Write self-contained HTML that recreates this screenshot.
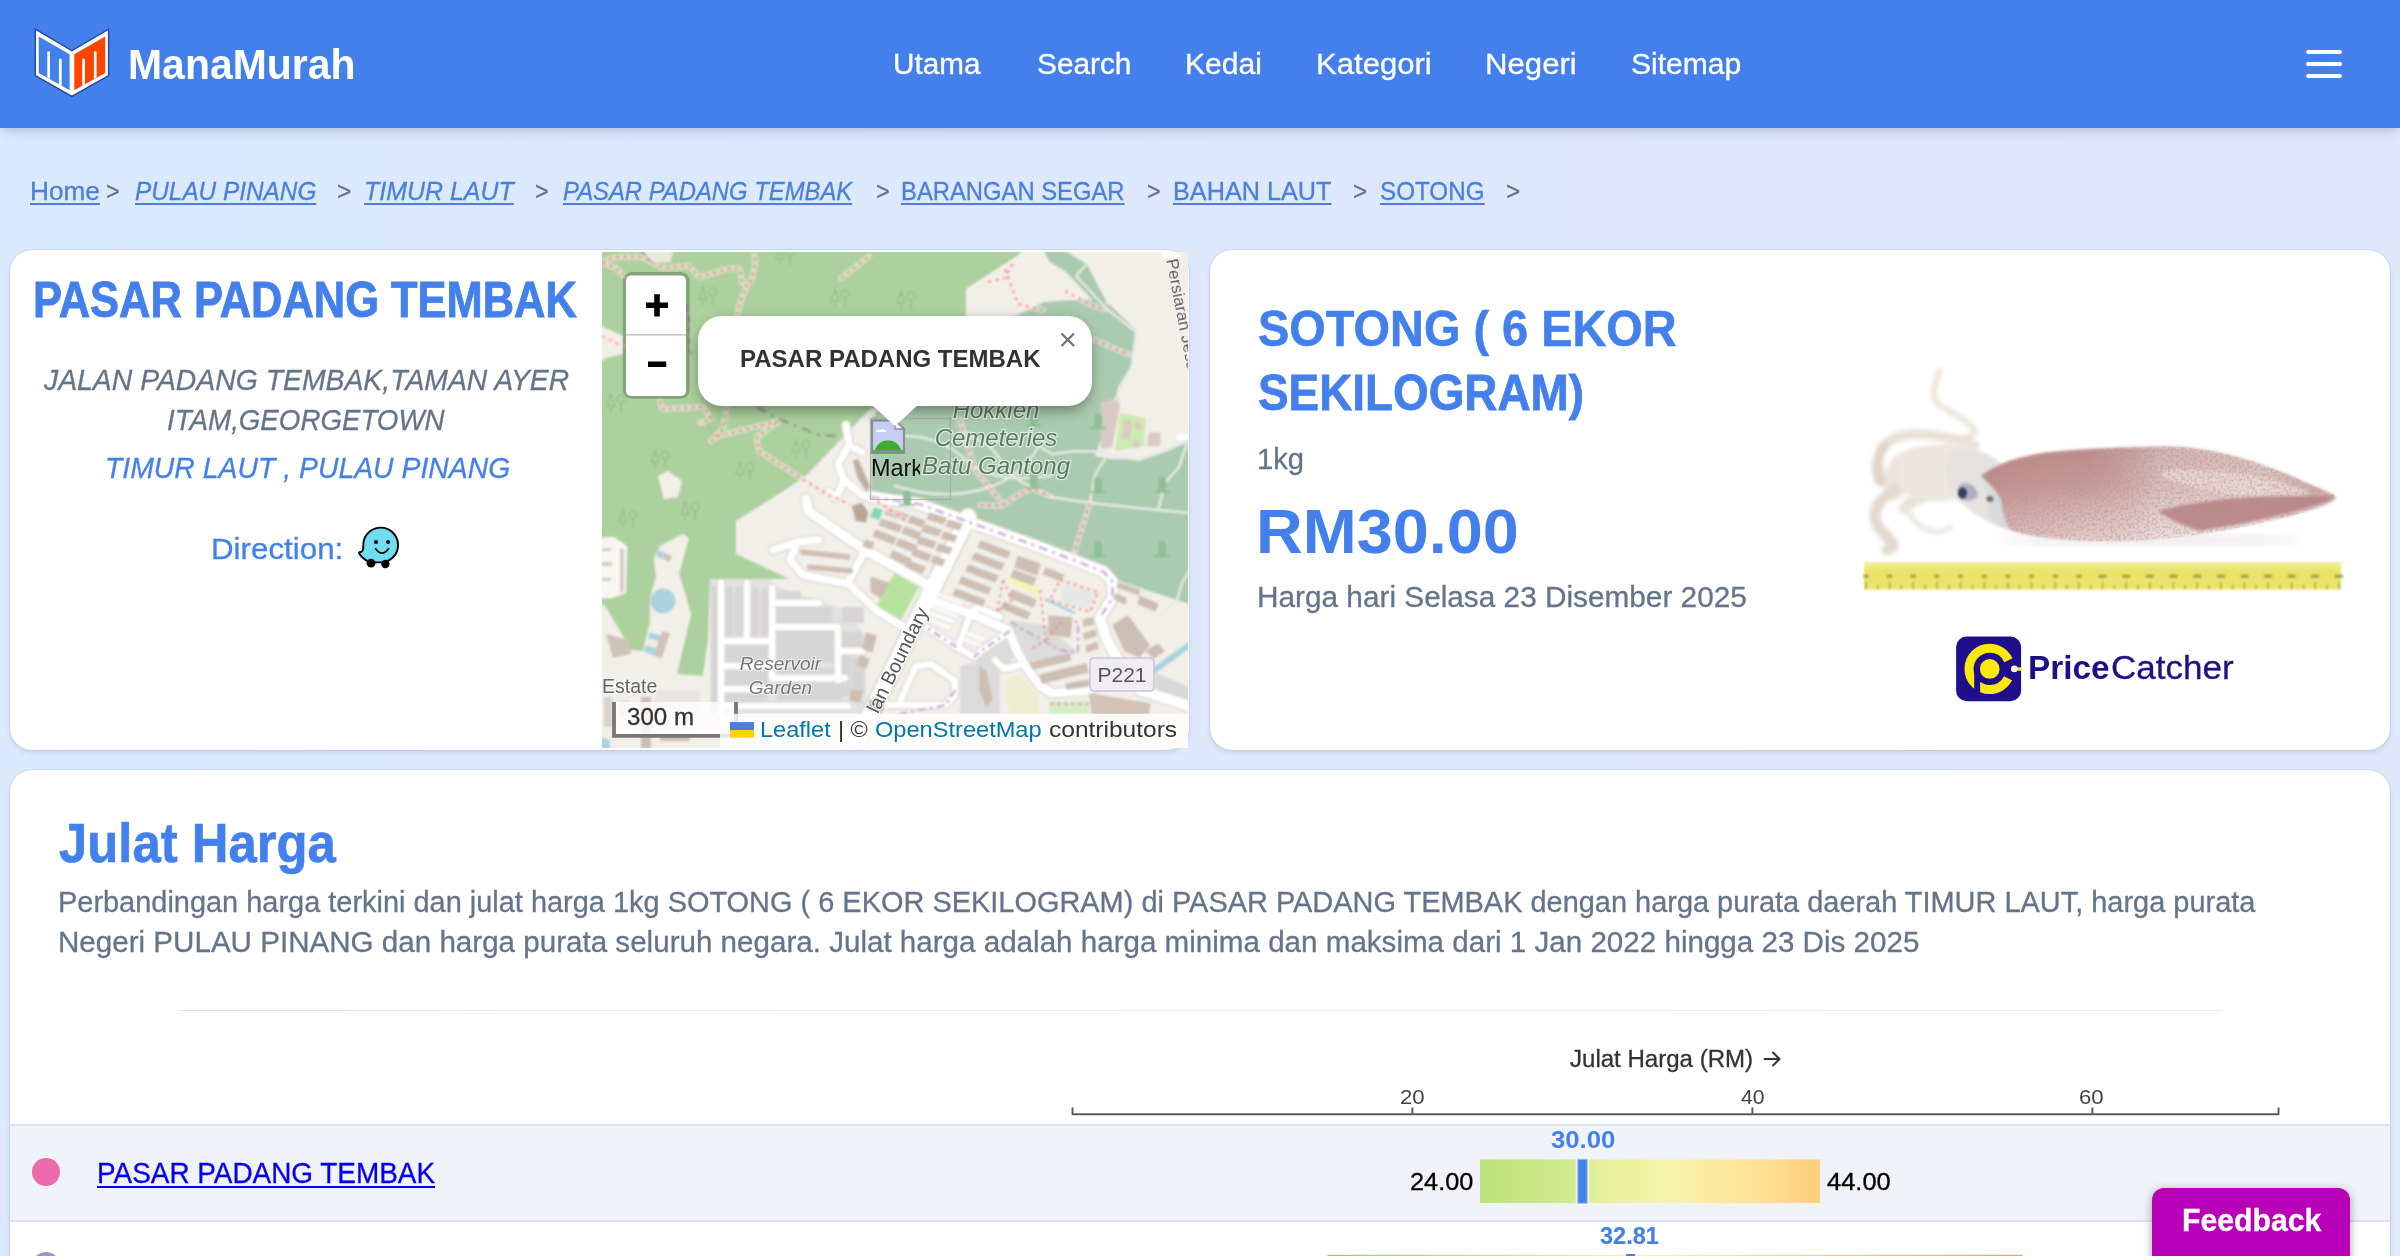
<!DOCTYPE html>
<html lang="ms"><head><meta charset="utf-8"><title>ManaMurah - SOTONG di PASAR PADANG TEMBAK</title>
<style>
*{box-sizing:border-box;margin:0;padding:0}
html,body{width:2400px;height:1256px;overflow:hidden}
body{font-family:"Liberation Sans",sans-serif;position:relative;background:linear-gradient(90deg,#dbeafe 0%,#e0e7fb 100%)}
.t{position:absolute;white-space:nowrap;display:block;z-index:5;transform-origin:0 50%}
.abs{position:absolute;display:block}
#hdr{left:0;top:0;width:2400px;height:128px;background:#4380eb;box-shadow:0 8px 14px -4px rgba(30,50,80,.13),0 3px 6px -1px rgba(30,50,80,.12)}
.card{background:#fff;border-radius:22px;box-shadow:0 0 0 1px rgba(160,170,185,.20),0 3px 5px rgba(100,120,150,.16)}
.hb{left:2306px;width:36px;height:4px;background:#fff;border-radius:2px}
#row1{left:10px;top:1124px;width:2380px;height:98px;background:#f0f3f9;border-top:2px solid #dde3ee;border-bottom:2px solid #dde3ee}
#fb{left:2152px;top:1188px;width:198px;height:90px;background:#b800b8;border-radius:12px;box-shadow:0 2px 10px rgba(0,0,0,.35);z-index:29}
</style></head><body>
<div class="abs" id="hdr"></div>
<div class="abs" style="left:30px;top:26px;width:84px;height:76px;z-index:6"><svg width="84" height="76" viewBox="30 26 84 76" style="display:block">
<path d="M35.300 29.200L71.900 50.800L108.600 29.200V75.500L71.900 96.400L35.300 75.500Z" fill="#fff" stroke="#23479a" stroke-width="1.400" stroke-linejoin="miter"/>
<path d="M38.700 36.400L69.600 54.300V90.300L38.700 73Z" fill="#4380eb"/>
<path d="M74.300 54.300L105.200 36.400V73L74.300 90.300Z" fill="#ff4500"/>
<path d="M47.300 51.500H50V79L47.300 77.500ZM58.900 58.700H61.700V86L58.900 84.500ZM82.200 58.700H85V84.500L82.200 86ZM93.900 51.500H96.600V77.500L93.900 79Z" fill="#fff"/>
</svg>
</div>
<div class="abs hb" style="top:50px;z-index:6"></div><div class="abs hb" style="top:62px;z-index:6"></div><div class="abs hb" style="top:74px;z-index:6"></div>

<div class="abs card" style="left:10px;top:250px;width:1179px;height:500px"></div>
<div class="abs" style="left:602px;top:252px;width:586.500px;height:496px;overflow:hidden;z-index:8"><div style="margin-left:-1px"><svg width="587" height="496" viewBox="601 252 587 496" style="display:block;font-family:'Liberation Sans',sans-serif">
<defs>
 <filter id="mb" x="-2%" y="-2%" width="104%" height="104%"><feGaussianBlur stdDeviation="0.85"/></filter>
 <filter id="lb" x="-2%" y="-2%" width="104%" height="104%"><feGaussianBlur stdDeviation="0.45"/></filter>
 <filter id="ps" x="-10%" y="-20%" width="120%" height="160%"><feGaussianBlur stdDeviation="7"/></filter>
 <g id="tree" fill="none" stroke="#97c08b" stroke-width="1.5" stroke-linecap="round"><circle cx="5" cy="-4" r="4"/><path d="M5 0V9M-5 -9L-9 3H-1ZM-5 3V9"/></g>
 <g id="grave" fill="#8fbf96"><path d="M-4 6V-4A4 4 0 0 1 4 -4V6H8V8H-8V6Z"/></g>
</defs>
<g filter="url(#mb)">
<rect x="595" y="246" width="600" height="510" fill="#f2efe9"/>
<!-- forest -->
<path fill="#add19e" d="M595 246H1024L1020 254L966 289V420L900 410L871 408L806 476L782 492L736 521V554L790 579H710L708 640L703 676L677 674L691 614L679 573L689 538L683 534L660 546L654 558L656 577L650 598V622L643 651L631 650L606 607L595 600V539L602 538L614 536L627 546L633 558L626 594L612 598L595 599V365L607 357.500L622.700 354V336L595 323Z"/>
<path fill="#f2efe9" d="M658 476L668 471L682 481L678 497L664 499Z"/>
<path fill="#f2efe9" d="M641 246L675 246L670 262L651 262Z" opacity=".85"/>
<!-- cemetery -->
<path fill="#aacbaf" d="M966 330L1018 315L1043 302L1087 299L1110 305L1136 330L1130 370L1114 400L1195 436V606L1116 580L1076 560L1000 531L967 515L919 501L871 495V420L880 406L966 406Z"/>
<path fill="#aacbaf" d="M1041 246L1056 246L1087 264L1107 303L1098 306L1066 272L1050 262Z"/>
<!-- compound -->
<path fill="#f2efe9" d="M1114 398L1128 398L1188 433V442L1168 451L1142 460L1110 459L1095 456L1098 448Z"/>
<path fill="#cdebb0" d="M1120 413L1146 418L1144 446L1115 451Z"/>
<path fill="#d9cbc4" d="M1101 402L1118 398L1120 406L1112 448L1101 449Z"/>
<path fill="#d9cbc4" d="M1149 432L1161 433L1160 446L1147 446ZM1124 420L1132 421L1130 440L1122 439Z"/>
<circle cx="1138" cy="426" r="4.5" fill="#d9cbc4"/><circle cx="1136" cy="444" r="4" fill="#d9cbc4"/>
<!-- residential gray zones -->
<path fill="#e3e2e1" d="M710 579H770L776 586L850 611L866 640V714H710Z"/>
<path fill="#dddcdc" d="M1010 620L1045 625L1078 652L1069 657L1031 664L1020 666L1016 651Z"/>
<path fill="#dddcdc" d="M980 651L1010 639L1016 651L1010 663L1002 666L995 660L990 664Z"/>
<path fill="#dcdbdb" d="M960 666L975 663L990 675L995 714H960ZM977 645L1000 636V714H980L975 680Z"/>
<path fill="#d9d9d9" d="M1155 672L1195 690V714L1155 695Z"/>
<path fill="#eceecf" d="M1008 678L1019 675L1039 696V714H1010L1005 690Z"/>
<path fill="#f5f4b4" d="M1010 575L1039 589L1037 596L1010 583Z"/>
<path fill="#e6e8e7" d="M1063 583L1096 592L1090 611L1060 601Z"/>
<path fill="#d3edc8" d="M1049 701H1089V714H1049Z"/>
<path fill="#b8e39f" d="M895 572L919 587L899 624L877 605Z"/>
<path fill="#80d9b4" d="M874 507L883 510L879 520L870 517Z"/>
<!-- gray building blocks in residential -->
<g fill="#d7d6d6">
<rect x="711" y="585" width="8" height="128"/>
<rect x="726" y="586" width="7" height="50"/><rect x="735" y="586" width="7" height="50"/><rect x="752" y="588" width="7" height="48"/><rect x="761" y="588" width="7" height="48"/>
<rect x="726" y="646" width="42" height="16"/><rect x="726" y="671" width="42" height="14"/><rect x="726" y="693" width="42" height="9"/>
<rect x="777" y="591" width="24" height="7"/><rect x="777" y="607" width="55" height="15"/><rect x="777" y="632" width="56" height="30"/><rect x="777" y="668" width="56" height="8"/><rect x="777" y="683" width="66" height="17"/>
<rect x="842" y="607" width="22" height="16"/><rect x="843" y="632" width="20" height="16"/><rect x="843" y="656" width="8" height="40"/>
<rect x="852" y="658" width="12" height="36"/>
</g>
<!-- water -->
<circle cx="663" cy="601" r="12.5" fill="#aad3df"/>
<path fill="#aad3df" d="M650 632L662 636L660 642L648 638ZM646 645L658 649L656 656L644 652ZM658 550L665 553L662 559L656 556Z"/>
<path d="M1045 599L1075 613" stroke="#a9d3de" stroke-width="3" fill="none"/>
<path d="M1152 672L1192 643" stroke="#aad3df" stroke-width="6" fill="none"/>
<path fill="#aad3df" d="M595 736L610 740V750H595Z"/>
<!-- left complex -->
<path fill="#f8f6f3" d="M595 538L614 537L627 546L626 593L612 598L595 599Z"/>
<path fill="#d6cbc3" d="M620 548L624 549V592L620 593ZM601 548H611V551H601ZM601 562H612V566H601ZM601 578H611V581H601Z"/>
<path fill="#d0c3b8" d="M606 634L629 640L631 654L613 658Z M662 631L670 633L662 658L654 656ZM665 553L672 556L669 562L663 559Z"/>
<path fill="#d9d4cf" d="M604 697H612V727H604ZM616 705L628 700L632 712L620 716Z"/><path fill="#cdbfb3" d="M641 697H651V750H641ZM660 735H690V741H660Z"/><path fill="#e0dfdf" d="M655 690H700V714H655Z" opacity=".6"/>
<!-- roads casing -->
<g fill="none" stroke="#d9d4cd" stroke-linecap="round" stroke-linejoin="round">
<path stroke-width="19" d="M968 517L852.500 750"/>
<path stroke-width="13" d="M871 497L919 504L966 521L1028 543L1076 561L1104 572L1112 581L1113 597L1100 618L1106 638L1118 660L1140 690L1195 708"/>
<path stroke-width="12" d="M806 499L808 511L865 550L919 580L936 590"/>
<path stroke-width="10" d="M865 550L848 583L877 611L905 628"/>
<path stroke-width="10" d="M773 550L797 542L819 540M797 543L790 560L803 575L849 584"/>
<path stroke-width="10" d="M846 425L849 445L838 464L844 480L836 498L829 492M854 448L862 452M844 480L862 495L872 497"/>
<path stroke-width="11" d="M932 600L971 614L1008 630L1017 651L1025 666L1040 686L1052 693L1090 691"/>
<path stroke-width="9" d="M918 622L958 648L974 657L981 651L1010 631M971 612L958 648M971 612L977 607L1000 617"/>
<path stroke-width="9" d="M901 699L916 666L931 664L955 681L954 696L946 705L886 705M995 660L1004 669L1017 666"/>
<path stroke-width="9" d="M721 583V714M747 583V640M772 588V678M721 641H772M721 666H772M721 689H772M721 706H848M772 603H819M772 627H838M838 627V680M838 651H863M772 678H845"/>
</g>
<!-- roads fill -->
<g fill="none" stroke="#fff" stroke-linecap="round" stroke-linejoin="round">
<path stroke-width="16" d="M968 517L852.500 750"/>
<path stroke-width="10.5" d="M871 497L919 504L966 521L1028 543L1076 561L1104 572L1112 581L1113 597L1100 618L1106 638L1118 660L1140 690L1195 708"/>
<path stroke-width="9.5" d="M806 499L808 511L865 550L919 580L936 590"/>
<path stroke-width="7.5" d="M865 550L848 583L877 611L905 628"/>
<path stroke-width="7.5" d="M773 550L797 542L819 540M797 543L790 560L803 575L849 584"/>
<path stroke-width="7.5" d="M846 425L849 445L838 464L844 480L836 498L829 492M854 448L862 452M844 480L862 495L872 497"/>
<path stroke-width="8.5" d="M932 600L971 614L1008 630L1017 651L1025 666L1040 686L1052 693L1090 691"/>
<path stroke-width="6.5" d="M918 622L958 648L974 657L981 651L1010 631M971 612L958 648M971 612L977 607L1000 617"/>
<path stroke-width="6.5" d="M901 699L916 666L931 664L955 681L954 696L946 705L886 705M995 660L1004 669L1017 666"/>
<path stroke-width="6.5" d="M721 583V714M747 583V640M772 588V678M721 641H772M721 666H772M721 689H772M721 706H848M772 603H819M772 627H838M838 627V680M838 651H863M772 678H845"/>
<path stroke-width="6" d="M1179 437L1190 437M1164 254L1177 256"/>
</g>
<!-- purple dashed -->
<path d="M871 497L919 504L966 521L1028 543L1076 561L1104 572L1112 581L1113 597L1101 616" fill="none" stroke="#c9a9d8" stroke-width="2.6" stroke-dasharray="9 5 3 5"/>
<path d="M1010 631L981 651L974 657M1010 622L1060 650L1078 653L1078 622L1062 622M918 622L958 648M955 690L946 705L900 714" fill="none" stroke="#c4abd3" stroke-width="2.4" stroke-dasharray="8 4 3 4"/>
<!-- buildings -->
<g fill="#cdbfb3" stroke="#cdbfb3" stroke-width="1.300" stroke-linejoin="round">
<path d="M852 506L862 503L868 512L866 522L856 521Z" fill="#b9a594"/><path d="M853 461L858 459L870 487L866 491L858 478Z" fill="#bfae9f"/>
<path d="M801 550L849 555V559L801 554ZM808 565L852 569V573L808 569ZM871 577L889 583L881 598L871 592Z"/>
<!-- block 1 rows -->
<path d="M888 508L908 515L905 521L885 514ZM911 516L925 521L922 527L908 522ZM882 519L902 526L899 532L879 525ZM905 527L921 533L918 539L902 533ZM876 530L896 538L893 544L873 536ZM899 539L917 546L914 552L896 545ZM893 551L911 559L908 565L890 557ZM866 540L874 543L871 549L863 546Z"/>
<path d="M930 513L946 518L943 524L927 519ZM949 520L962 524L959 530L946 526ZM925 525L941 530L938 536L922 531ZM944 532L957 536L954 542L941 538ZM920 537L936 542L933 548L917 543ZM939 544L952 548L949 554L936 550ZM915 549L931 555L928 561L912 555ZM934 556L945 560L942 566L931 562ZM909 561L925 567L922 573L906 567Z"/>
<!-- block 2 rows (right of Jalan Boundary) -->
<path d="M981 541L1010 552L1007 558L978 547ZM975 553L1004 564L1001 570L972 559ZM969 565L998 576L995 582L966 571ZM962 577L991 588L988 594L959 583ZM1018 556L1040 564L1037 575L1015 567ZM1012 590L1036 600L1033 607L1009 597ZM1004 602L1030 613L1027 619L1001 608ZM956 589L985 600L982 606L953 595ZM1014 570L1036 578L1033 585L1011 577ZM1046 568L1064 575L1061 581L1043 574Z"/>
<path d="M1049 616L1072 618L1070 637L1049 634ZM1031 663L1069 654L1071 660L1033 669ZM1040 675L1086 664L1088 672L1042 683ZM1066 684L1089 680L1089 686L1067 689Z"/>
<path d="M1113 625L1128 616L1149 645L1139 657L1125 651ZM1146 651L1158 644L1164 651L1154 658ZM1119 583L1140 590L1138 595L1117 587ZM1140 596L1158 604L1155 611L1138 604ZM1116 594L1126 598L1125 604L1114 599ZM1083 620L1092 618L1094 624L1084 626ZM1083 634L1095 630L1096 636L1085 639ZM1086 646L1097 642L1098 648L1087 652Z"/>
<path d="M1090 694L1150 704L1148 714H1092Z" fill="#d4c4b8"/>
<path d="M866 633L876 636L872 652L863 649ZM860 656L869 659L866 668L857 665ZM852 690L862 692L860 702L850 700ZM870 700L884 703L882 712L868 709ZM980 667L986 672L992 700L986 706L980 690Z"/>
</g>
<!-- parking rows -->
<path d="M937 594L962 604M934 600L960 610M931 606L957 616M928 612L954 622M925 618L950 628M965 632L985 640M962 638L982 646" stroke="#fff" stroke-width="2.6" fill="none" opacity=".9"/>
<!-- cemetery thin paths -->
<g fill="none" stroke="#e4ebe3" stroke-width="2.4" stroke-linecap="round" stroke-linejoin="round">
<path d="M1039 446L1052 454L1076 451L1106 452L1112 455L1139 460L1168 449L1187 440"/>
<path d="M1107 455L1095 475L1090 502"/>
<path d="M1050 497L1090 503L1158 510L1190 513"/>
<path d="M1187 443L1179 467L1165 483L1158 510"/>
<path d="M1190 569L1182 583L1177 600L1160 615"/>
<path d="M960 434Q990 440 1000 460T1040 490M905 436Q940 436 966 460T1050 476M895 486Q940 500 980 490T1039 446M1086 265L1076 276L1106 308L1136 332L1132 366L1119 388L1116 400"/>
</g>
<!-- footpaths -->
<g fill="none" stroke="rgba(250,240,235,.5)" stroke-width="6" stroke-linecap="round" stroke-linejoin="round">
<path id="fps" d="M602 263L611 258.500L621.500 256.600L640.600 257.200L650 261.300L657.300 265.500L667 268L683.600 266L688.400 265.500L695.500 272.700L699 277L731.300 268L739.700 269L742 282.200L747 285.800L741 300L737.300 314.500M754 250L755.200 262L751.600 280L747 285.800M841 278L857 266L869 256M602 263L615.500 268L624 275.700M595 333L622 346M660 401L662 409L703 407L711 419L700 423M711 441L720 435L739 431L779 421L757 437L759 451L799 477L825 493L850 505M727 407L723 429L711 441M988 282L1005 278L1013 263M1005 269L1018 304L1043 310M1065 291L1093 306L1106 310M1095 340L1130 355M980 505L1001 506L1023 492L1033 489L1050 496M1090 503L1074 553M871 497L905 520M960 420L975 470L1000 500"/>
</g>
<use href="#fps" fill="none" stroke="#f48a82" stroke-width="2.4" stroke-dasharray="3.5 4" opacity=".85"/>
<g fill="none" stroke="#f48a82" stroke-width="2.2" stroke-dasharray="3.5 3.5" opacity=".85">
<path d="M1003 580L1012 600L997 612L1003 580M1040 590L1046 640L1030 650M1060 580L1098 592L1090 612L1050 600ZM1046 640L1062 622M1050 704H1088"/>
</g>
<path d="M757 407L779 419L819 435L837 436" fill="none" stroke="#8f9a8c" stroke-width="2.600" stroke-dasharray="10 6 3 6"/>
<path d="M640.600 250L651.300 262M686 305L689.600 321.600L688.400 333.600L689.600 351.500L695.500 357.500" fill="none" stroke="#a497ad" stroke-width="2.400" stroke-dasharray="7 4" opacity=".8"/>
<!-- icons -->
<use href="#tree" x="708" y="296"/><use href="#tree" x="840" y="298"/><use href="#tree" x="616" y="403"/><use href="#tree" x="660" y="459"/><use href="#tree" x="745" y="471"/><use href="#tree" x="801" y="449"/><use href="#tree" x="785" y="256"/><use href="#tree" x="628" y="519"/><use href="#tree" x="690" y="511"/><use href="#tree" x="906" y="300"/><use href="#tree" x="717" y="425" opacity=".6"/>
<use href="#grave" x="1098" y="421"/><use href="#grave" x="1098" y="485"/><use href="#grave" x="1162" y="485"/><use href="#grave" x="1098" y="549"/><use href="#grave" x="1162" y="549"/><use href="#grave" x="1034" y="481"/><use href="#grave" x="907" y="498"/><use href="#grave" x="1034" y="419"/>
</g>
<g filter="url(#lb)">
<!-- labels -->
<g font-style="italic" fill="#5c7a63" stroke="rgba(240,248,240,.7)" stroke-width="2.5" paint-order="stroke" font-size="24" text-anchor="middle">
<text x="996" y="418">Hokkien</text><text x="996" y="446">Cemeteries</text><text x="996" y="474">Batu Gantong</text>
</g>
<g font-style="italic" fill="#777" stroke="rgba(255,255,255,.6)" stroke-width="2" paint-order="stroke" font-size="19" text-anchor="middle">
<text x="780.500" y="669.500">Reservoir</text><text x="780.500" y="693.500">Garden</text>
</g>
<text x="602" y="693" font-size="19.500" fill="#666" stroke="rgba(255,255,255,.6)" stroke-width="2" paint-order="stroke">Estate</text>
<text transform="translate(878 714.500) rotate(-63.700)" font-size="19.500" fill="#555" stroke="rgba(255,255,255,.7)" stroke-width="2" paint-order="stroke">lan Boundary</text>
<text transform="translate(1166 260) rotate(79)" font-size="17" fill="#555" stroke="rgba(255,255,255,.7)" stroke-width="2" paint-order="stroke">Persiaran Jesselton</text>
<rect x="1090" y="658" width="64" height="33" rx="4" fill="#efecf3" stroke="#c9c6cf" stroke-width="1.6"/>
<text x="1122" y="682" font-size="21" fill="#555" text-anchor="middle">P221</text>
</g>
<!-- marker placeholders -->
<rect x="870.5" y="418.5" width="80" height="81" fill="none" stroke="rgba(160,165,170,.75)" stroke-width="1.2"/>
<g>
 <path d="M872 420.500H895L904 429V453H872Z" fill="#c6cff1" stroke="#8a8f96" stroke-width="2.200"/>
 <path d="M895 420.500V429H904Z" fill="#eef0f8" stroke="#8a8f96" stroke-width="1.400"/>
 <path d="M874.500 451C877 443 882 440.500 888 440.500S899 443 901.500 451Z" fill="#3faf2b"/>
 <rect x="872" y="450" width="32" height="3" fill="#7e9280"/>
 <path d="M876 432a3 3 0 0 1 4.500-2a3.200 3.200 0 0 1 5.500 2z" fill="#fff"/>
</g>
<svg x="871" y="452" width="49" height="30" viewBox="0 0 49 30"><text x="0" y="24" font-size="24.500" fill="#111" textLength="52" lengthAdjust="spacingAndGlyphs">Mark</text></svg>
<!-- popup -->
<rect x="700" y="322" width="390" height="88" rx="24" fill="rgba(0,0,0,.42)" filter="url(#ps)"/>
<path d="M872 405H918L895 426Z" fill="#fff"/>
<rect x="698" y="316" width="394" height="90" rx="24" fill="#fff"/>
<path d="M1061.500 333.500L1074 346M1074 333.500L1061.500 346" stroke="#757575" stroke-width="2.4" fill="none"/>
<!-- zoom control -->
<rect x="622.700" y="272" width="67" height="126.800" rx="9" fill="rgba(0,0,0,.22)"/>
<rect x="626" y="275.600" width="60" height="120.300" rx="5" fill="#fff"/>
<rect x="626" y="334" width="60" height="1.700" fill="#ccc"/>
<path d="M646 305.200H668M657 294.200V316.500M648 364.300H666.300" stroke="#000" stroke-width="5.600" fill="none"/>
<!-- scale -->
<rect x="612" y="702" width="126" height="34" fill="rgba(255,255,255,.8)"/>
<path d="M614 702V735.900H736V702" fill="none" stroke="#777" stroke-width="3.800"/>
<!-- attribution -->
<rect x="720" y="713.800" width="470" height="36" fill="rgba(255,255,255,.82)"/>
<rect x="730" y="722.100" width="24" height="8" fill="#4c7be1"/><rect x="730" y="730" width="24" height="7.700" fill="#ffd500"/>
</svg>
</div></div>
<div class="abs" style="left:356px;top:526px;width:46px;height:46px;z-index:6"><svg width="46" height="46" viewBox="356 526 46 46" style="display:block">
<path d="M359.200 552.300Q363.500 552.500 363.300 546A17.400 17.400 0 1 1 381 562.400L371 562.400Q363.500 560.500 359.200 553.600Z" fill="#71dbef" stroke="#000" stroke-width="1.900" stroke-linejoin="round"/>
<circle cx="371" cy="563.200" r="4.400" fill="#000"/><circle cx="385.400" cy="564" r="4.200" fill="#000"/>
<circle cx="376" cy="541.900" r="2" fill="#000"/><circle cx="388.100" cy="541.900" r="2" fill="#000"/>
<path d="M375.600 548.800Q382 557.500 388.500 548.800" fill="none" stroke="#000" stroke-width="1.700" stroke-linecap="round"/>
</svg>
</div>

<div class="abs card" style="left:1210px;top:250px;width:1180px;height:500px"></div>
<div class="abs" style="left:1850px;top:350px;width:510px;height:260px;z-index:6"><svg width="510" height="260" viewBox="1850 350 510 260" style="display:block">
<defs>
<filter id="sb1" x="-5%" y="-10%" width="110%" height="120%"><feGaussianBlur stdDeviation="1.500"/></filter>
<filter id="sbt" x="-10%" y="-10%" width="120%" height="120%"><feGaussianBlur stdDeviation="2.200"/></filter>
<filter id="sb2" x="-5%" y="-10%" width="110%" height="120%"><feGaussianBlur stdDeviation="0.900"/></filter>
<filter id="sb3" x="-10%" y="-20%" width="120%" height="140%"><feGaussianBlur stdDeviation="5"/></filter>
<filter id="spk" x="0" y="0" width="100%" height="100%"><feTurbulence type="fractalNoise" baseFrequency="0.380" numOctaves="2" seed="7" result="n"/><feColorMatrix in="n" type="matrix" values="0 0 0 0 .58  0 0 0 0 .25  0 0 0 0 .25  0 0 0 -3.200 1.900" result="c"/><feComposite in="c" in2="SourceGraphic" operator="in"/><feGaussianBlur stdDeviation="0.700"/></filter>
<linearGradient id="sg" x1="0" y1="0" x2="0" y2="1"><stop offset="0" stop-color="#b38b87"/><stop offset=".4" stop-color="#c29f9b"/><stop offset=".75" stop-color="#dccbc8"/><stop offset="1" stop-color="#ece5e3"/></linearGradient>
<linearGradient id="sg2" x1="0" y1="0" x2="1" y2="0"><stop offset="0" stop-color="#b57f7f" stop-opacity=".5"/><stop offset=".3" stop-color="#c18f8f" stop-opacity=".25"/><stop offset=".5" stop-color="#e6dcda" stop-opacity=".5"/><stop offset=".8" stop-color="#e9e1df" stop-opacity=".6"/><stop offset="1" stop-color="#b9a09c" stop-opacity=".5"/></linearGradient>
</defs>
<ellipse cx="2150" cy="540" rx="150" ry="5" fill="#d8d0d0" opacity=".45" filter="url(#sb3)"/>
<g filter="url(#sbt)" fill="none" stroke="#e9e1d8" stroke-linecap="round" stroke-linejoin="round">
<path stroke-width="6" stroke="#ebe5da" d="M1939.500 371C1934 385 1931 398 1938 404C1950 412 1968 420 1975 430C1976 436 1968 438 1955 438"/>
<path stroke-width="10" d="M1975 446C1950 436 1915 430 1895 438C1880 445 1876 458 1880 472C1884 482 1890 486 1894 484"/>
<path stroke-width="16" stroke="#ece6df" d="M1972 458C1945 450 1915 452 1900 462C1892 470 1894 480 1900 486"/>
<path stroke-width="18" stroke="#ebe4dc" d="M1968 474C1940 470 1910 478 1892 492"/>
<path stroke-width="11" stroke="#e3d8cd" d="M1895 490C1880 498 1872 510 1876 522C1880 532 1890 538 1893 544C1893 548 1889 550 1887 550"/>
<path stroke-width="12" d="M1965 488C1940 488 1915 496 1905 508"/>
<path stroke-width="5" stroke="#ebe6e0" d="M1908 508C1910 520 1922 530 1936 532C1944 532 1948 529 1950 527"/>
<path stroke-width="9" stroke="#e0d3c6" d="M1884 446C1876 456 1874 470 1880 482"/>
</g>
<g filter="url(#sbt)"><path d="M1975 446C1955 440 1925 448 1905 462C1895 475 1900 490 1915 498C1935 505 1960 500 1975 492Z" fill="#ece7e1"/></g>
<g filter="url(#sb1)">
<path d="M1950 452C1965 444 1990 452 2002 464L2010 530C1996 528 1980 518 1962 504C1948 494 1940 470 1950 452Z" fill="#e6e2df"/>
<path d="M1958 486C1966 480 1976 484 1978 494C1976 502 1966 502 1960 498Z" fill="#9da3b8" opacity=".8"/>
<path d="M1984 478L2001 500L2010 530L1990 518Z" fill="#d6d9dd" opacity=".9"/>
<path d="M1981 476C1990 468 2010 458 2043 453C2080 449 2120 447 2166 446.500C2215 447 2260 462 2300 480C2318 488 2334 494 2336 497C2334 503 2318 508 2290 516C2250 527 2200 536 2150 540C2090 543 2040 540 2010 530C2004 520 2002 508 2001 500C1996 490 1988 482 1981 476Z" fill="url(#sg)"/>
<path d="M1981 476C1990 468 2010 458 2043 453C2080 449 2120 447 2166 446.500C2215 447 2260 462 2300 480C2318 488 2334 494 2336 497C2334 503 2318 508 2290 516C2250 527 2200 536 2150 540C2090 543 2040 540 2010 530C2004 520 2002 508 2001 500C1996 490 1988 482 1981 476Z" fill="url(#sg2)"/>
<ellipse cx="2235" cy="484" rx="75" ry="11" transform="rotate(8 2235 484)" fill="#eee6e4" opacity=".55"/><path d="M2158 511C2200 499 2270 493 2334 497C2320 506 2270 520 2200 531C2185 527 2168 519 2158 511Z" fill="#b27f80" opacity=".85"/>
</g>
<path d="M1981 476C1990 468 2010 458 2043 453C2080 449 2120 447 2166 446.500C2215 447 2260 462 2300 480C2318 488 2334 494 2336 497C2334 503 2318 508 2290 516C2250 527 2200 536 2150 540C2090 543 2040 540 2010 530C2004 520 2002 508 2001 500C1996 490 1988 482 1981 476Z" fill="#fff" filter="url(#spk)" opacity=".4"/>
<g filter="url(#sb2)">
<ellipse cx="1962.500" cy="493" rx="4.500" ry="5.500" fill="#3a3e5c"/>
<ellipse cx="1990" cy="499" rx="3.500" ry="3" fill="#5b5d70" opacity=".8"/>
<rect x="1864" y="562.500" width="477" height="27" fill="#ebe46a"/>
<rect x="1864" y="562.500" width="477" height="5" fill="#f1ec8e"/>
<path d="M1866.0 582.0V589M1877.8 585.0V589M1889.7 582.0V589M1901.5 585.0V589M1913.3 582.0V589M1925.1 585.0V589M1937.0 582.0V589M1948.8 585.0V589M1960.6 582.0V589M1972.4 585.0V589M1984.2 582.0V589M1996.1 585.0V589M2007.9 582.0V589M2019.7 585.0V589M2031.5 582.0V589M2043.4 585.0V589M2055.2 582.0V589M2067.0 585.0V589M2078.8 582.0V589M2090.7 585.0V589M2102.5 582.0V589M2114.3 585.0V589M2126.2 582.0V589M2138.0 585.0V589M2149.8 582.0V589M2161.6 585.0V589M2173.4 582.0V589M2185.3 585.0V589M2197.1 582.0V589M2208.9 585.0V589M2220.8 582.0V589M2232.6 585.0V589M2244.4 582.0V589M2256.2 585.0V589M2268.1 582.0V589M2279.9 585.0V589M2291.7 582.0V589M2303.5 585.0V589M2315.3 582.0V589M2327.2 585.0V589M2339.0 582.0V589" stroke="#8f8b35" stroke-width="1.200" fill="none"/>
<g fill="#8f8b35" opacity=".75"><rect x="1863.5" y="574.500" width="5.0" height="3.500"/><rect x="1887.2" y="574.500" width="5.0" height="3.500"/><rect x="1910.8" y="574.500" width="5.0" height="3.500"/><rect x="1934.5" y="574.500" width="5.0" height="3.500"/><rect x="1958.1" y="574.500" width="5.0" height="3.500"/><rect x="1981.8" y="574.500" width="5.0" height="3.500"/><rect x="2005.4" y="574.500" width="5.0" height="3.500"/><rect x="2029.0" y="574.500" width="5.0" height="3.500"/><rect x="2052.7" y="574.500" width="5.0" height="3.500"/><rect x="2076.3" y="574.500" width="5.0" height="3.500"/><rect x="2098.5" y="574.500" width="8.0" height="3.500"/><rect x="2122.2" y="574.500" width="8.0" height="3.500"/><rect x="2145.8" y="574.500" width="8.0" height="3.500"/><rect x="2169.4" y="574.500" width="8.0" height="3.500"/><rect x="2193.1" y="574.500" width="8.0" height="3.500"/><rect x="2216.8" y="574.500" width="8.0" height="3.500"/><rect x="2240.4" y="574.500" width="8.0" height="3.500"/><rect x="2264.1" y="574.500" width="8.0" height="3.500"/><rect x="2287.7" y="574.500" width="8.0" height="3.500"/><rect x="2311.3" y="574.500" width="8.0" height="3.500"/><rect x="2335.0" y="574.500" width="8.0" height="3.500"/></g>
</g>
</svg></div>
<div class="abs" style="left:1950px;top:630px;width:300px;height:80px;z-index:6"><svg width="300" height="80" viewBox="1950 630 300 80" style="display:block">
<rect x="1956.100" y="636.600" width="65" height="64.600" rx="10.500" fill="#1f0f8c"/>
<circle cx="1989.700" cy="668.900" r="20.650" fill="none" stroke="#fde910" stroke-width="9.100" stroke-dasharray="110.250 19.500" stroke-dashoffset="-9.730"/>
<circle cx="1989.700" cy="668.900" r="9.900" fill="#fde910"/>
<rect x="1974.200" y="669" width="5.900" height="23.500" fill="#1f0f8c"/>
<rect x="2014" y="667.300" width="8" height="3.400" fill="#f4ec3a"/>
<circle cx="2014.300" cy="668.900" r="3.300" fill="#fffbe0"/>
</svg>
</div>

<div class="abs card" style="left:10px;top:770px;width:2380px;height:560px"></div>
<div class="abs" style="left:178px;top:1010px;width:2044px;height:1px;background:linear-gradient(90deg,#d9e6ec,#eef2e4 50%,#f3ebe2);z-index:4"></div>
<div class="abs" id="row1"></div>
<div class="abs" style="left:32px;top:1158px;width:28px;height:28px;border-radius:50%;background:#ec69ad;z-index:4"></div>
<div class="abs" style="left:32px;top:1252px;width:28px;height:28px;border-radius:50%;background:#9a97c6;z-index:4"></div>
<svg class="abs" style="left:1060px;top:1040px;z-index:4" width="1240" height="220" viewBox="1060 1040 1240 220">
 <defs>
  <linearGradient id="g1" x1="0" x2="1" y1="0" y2="0"><stop offset="0" stop-color="#bde37b"/><stop offset=".27" stop-color="#d3ea90"/><stop offset=".36" stop-color="#e5f09c"/><stop offset=".56" stop-color="#f8f4aa"/><stop offset=".76" stop-color="#fde69b"/><stop offset="1" stop-color="#fdcf7c"/></linearGradient>
  <linearGradient id="g2" x1="0" x2="1" y1="0" y2="0"><stop offset="0" stop-color="#8ccf74"/><stop offset=".3" stop-color="#d3ea90"/><stop offset=".45" stop-color="#f8f4aa"/><stop offset=".7" stop-color="#fdcf7c"/><stop offset="1" stop-color="#f69a6a"/></linearGradient>
 </defs>
 <path d="M1072.5 1107.5V1114.2H2278.5V1107.5M1412.4 1107.5V1114M1752.4 1107.5V1114M2092.4 1107.5V1114" fill="none" stroke="#5a5a5a" stroke-width="1.9"/>
 <path d="M1764.500 1059H1779M1773 1052.500L1779.500 1059L1773 1065.500" fill="none" stroke="#333" stroke-width="2" stroke-linecap="round" stroke-linejoin="round"/>
 <rect x="1480" y="1159.5" width="340" height="43.5" fill="url(#g1)"/>
 <rect x="1577" y="1158.5" width="11" height="45.5" fill="#4380eb" stroke="rgba(255,255,255,.55)" stroke-width="2.5"/>
 <rect x="1327.5" y="1254.8" width="695" height="44" fill="url(#g2)"/>
 <rect x="1626" y="1254" width="9" height="45" fill="#4380eb"/>
</svg>
<div class="abs" id="fb"></div>
<span class="t" style="left:127.77px;top:38.71px;font-size:42.4px;line-height:51px;font-weight:700;color:#fff;transform:scaleX(0.9662);">ManaMurah</span>
<span class="t" style="left:892.69px;top:46.28px;font-size:29.5px;line-height:35px;font-weight:400;color:#fff;transform:scaleX(1.0061);-webkit-text-stroke:0.3px;">Utama</span>
<span class="t" style="left:1036.99px;top:46.28px;font-size:29.5px;line-height:35px;font-weight:400;color:#fff;transform:scaleX(1.0103);-webkit-text-stroke:0.3px;">Search</span>
<span class="t" style="left:1185.26px;top:46.28px;font-size:29.5px;line-height:35px;font-weight:400;color:#fff;transform:scaleX(1.0209);-webkit-text-stroke:0.3px;">Kedai</span>
<span class="t" style="left:1315.89px;top:46.28px;font-size:29.5px;line-height:35px;font-weight:400;color:#fff;transform:scaleX(1.0534);-webkit-text-stroke:0.3px;">Kategori</span>
<span class="t" style="left:1485.19px;top:46.28px;font-size:29.5px;line-height:35px;font-weight:400;color:#fff;transform:scaleX(1.0558);-webkit-text-stroke:0.3px;">Negeri</span>
<span class="t" style="left:1630.98px;top:46.28px;font-size:29.5px;line-height:35px;font-weight:400;color:#fff;transform:scaleX(1.0177);-webkit-text-stroke:0.3px;">Sitemap</span>
<span class="t" style="left:30.23px;top:176.03px;font-size:25.3px;line-height:30px;font-weight:400;color:#4a7fdf;transform:scaleX(1.0356);-webkit-text-stroke:0.3px;text-decoration:underline;text-decoration-thickness:2px;text-underline-offset:3px;">Home</span>
<span class="t" style="left:106.08px;top:176.03px;font-size:25.3px;line-height:30px;font-weight:400;color:#6b7280;transform:scaleX(0.9231);-webkit-text-stroke:0.3px;">&gt;</span>
<span class="t" style="left:135px;top:176.03px;font-size:25.3px;line-height:30px;font-weight:400;color:#4a7fdf;transform:scaleX(0.9628);font-style:italic;-webkit-text-stroke:0.3px;text-decoration:underline;text-decoration-thickness:2px;text-underline-offset:3px;">PULAU PINANG</span>
<span class="t" style="left:337.02px;top:176.03px;font-size:25.3px;line-height:30px;font-weight:400;color:#6b7280;transform:scaleX(0.9769);-webkit-text-stroke:0.3px;">&gt;</span>
<span class="t" style="left:363.73px;top:176.03px;font-size:25.3px;line-height:30px;font-weight:400;color:#4a7fdf;transform:scaleX(0.9866);font-style:italic;-webkit-text-stroke:0.3px;text-decoration:underline;text-decoration-thickness:2px;text-underline-offset:3px;">TIMUR LAUT</span>
<span class="t" style="left:535.08px;top:176.03px;font-size:25.3px;line-height:30px;font-weight:400;color:#6b7280;transform:scaleX(0.9231);-webkit-text-stroke:0.3px;">&gt;</span>
<span class="t" style="left:563.3px;top:176.03px;font-size:25.3px;line-height:30px;font-weight:400;color:#4a7fdf;transform:scaleX(0.9424);font-style:italic;-webkit-text-stroke:0.3px;text-decoration:underline;text-decoration-thickness:2px;text-underline-offset:3px;">PASAR PADANG TEMBAK</span>
<span class="t" style="left:875.78px;top:176.03px;font-size:25.3px;line-height:30px;font-weight:400;color:#6b7280;transform:scaleX(0.9231);-webkit-text-stroke:0.3px;">&gt;</span>
<span class="t" style="left:901.42px;top:176.03px;font-size:25.3px;line-height:30px;font-weight:400;color:#4a7fdf;transform:scaleX(0.9409);-webkit-text-stroke:0.3px;text-decoration:underline;text-decoration-thickness:2px;text-underline-offset:3px;">BARANGAN SEGAR</span>
<span class="t" style="left:1147.08px;top:176.03px;font-size:25.3px;line-height:30px;font-weight:400;color:#6b7280;transform:scaleX(0.9231);-webkit-text-stroke:0.3px;">&gt;</span>
<span class="t" style="left:1172.71px;top:176.03px;font-size:25.3px;line-height:30px;font-weight:400;color:#4a7fdf;transform:scaleX(0.9975);-webkit-text-stroke:0.3px;text-decoration:underline;text-decoration-thickness:2px;text-underline-offset:3px;">BAHAN LAUT</span>
<span class="t" style="left:1352.54px;top:176.03px;font-size:25.3px;line-height:30px;font-weight:400;color:#6b7280;transform:scaleX(0.9615);-webkit-text-stroke:0.3px;">&gt;</span>
<span class="t" style="left:1380.04px;top:176.03px;font-size:25.3px;line-height:30px;font-weight:400;color:#4a7fdf;transform:scaleX(0.9578);-webkit-text-stroke:0.3px;text-decoration:underline;text-decoration-thickness:2px;text-underline-offset:3px;">SOTONG</span>
<span class="t" style="left:1506.04px;top:176.03px;font-size:25.3px;line-height:30px;font-weight:400;color:#6b7280;transform:scaleX(0.9615);-webkit-text-stroke:0.3px;">&gt;</span>
<span class="t" style="left:33.42px;top:268.57px;font-size:50.6px;line-height:61px;font-weight:700;color:#4380eb;transform:scaleX(0.8586);-webkit-text-stroke:0.9px;">PASAR PADANG TEMBAK</span>
<span class="t" style="left:44.46px;top:361.98px;font-size:29.5px;line-height:35px;font-weight:400;color:#64748b;transform:scaleX(0.9613);font-style:italic;-webkit-text-stroke:0.3px;">JALAN PADANG TEMBAK,TAMAN AYER</span>
<span class="t" style="left:166.76px;top:402.28px;font-size:29.5px;line-height:35px;font-weight:400;color:#64748b;transform:scaleX(0.9392);font-style:italic;-webkit-text-stroke:0.3px;">ITAM,GEORGETOWN</span>
<span class="t" style="left:104.88px;top:450.08px;font-size:29.5px;line-height:35px;font-weight:400;color:#4380eb;transform:scaleX(0.9622);font-style:italic;-webkit-text-stroke:0.3px;">TIMUR LAUT , PULAU PINANG</span>
<span class="t" style="left:210.88px;top:530.58px;font-size:29.5px;line-height:35px;font-weight:400;color:#4380eb;transform:scaleX(1.0615);-webkit-text-stroke:0.3px;">Direction:</span>
<span class="t" style="left:1258.47px;top:297.97px;font-size:50.6px;line-height:61px;font-weight:700;color:#4380eb;transform:scaleX(0.9269);-webkit-text-stroke:0.59px;">SOTONG ( 6 EKOR</span>
<span class="t" style="left:1258.49px;top:362.27px;font-size:50.6px;line-height:61px;font-weight:700;color:#4380eb;transform:scaleX(0.9061);-webkit-text-stroke:0.76px;">SEKILOGRAM)</span>
<span class="t" style="left:1257.03px;top:440.68px;font-size:29.5px;line-height:35px;font-weight:400;color:#64748b;transform:scaleX(0.9874);-webkit-text-stroke:0.3px;">1kg</span>
<span class="t" style="left:1255.88px;top:493.74px;font-size:62.8px;line-height:75px;font-weight:700;color:#4380eb;transform:scaleX(1.031);">RM30.00</span>
<span class="t" style="left:1256.98px;top:579.48px;font-size:29.5px;line-height:35px;font-weight:400;color:#64748b;transform:scaleX(1.0092);-webkit-text-stroke:0.3px;">Harga hari Selasa 23 Disember 2025</span>
<span class="t" style="left:58.8px;top:810.45px;font-size:54.7px;line-height:66px;font-weight:700;color:#4380eb;transform:scaleX(0.9295);-webkit-text-stroke:0.62px;">Julat Harga</span>
<span class="t" style="left:57.84px;top:884.28px;font-size:29.5px;line-height:35px;font-weight:400;color:#64748b;transform:scaleX(0.9808);-webkit-text-stroke:0.3px;">Perbandingan harga terkini dan julat harga 1kg SOTONG ( 6 EKOR SEKILOGRAM) di PASAR PADANG TEMBAK dengan harga purata daerah TIMUR LAUT, harga purata</span>
<span class="t" style="left:57.79px;top:924.28px;font-size:29.5px;line-height:35px;font-weight:400;color:#64748b;transform:scaleX(1.0027);-webkit-text-stroke:0.3px;">Negeri PULAU PINANG dan harga purata seluruh negara. Julat harga adalah harga minima dan maksima dari 1 Jan 2022 hingga 23 Dis 2025</span>
<span class="t" style="left:97.41px;top:1154.68px;font-size:29.5px;line-height:35px;font-weight:400;color:#0000ee;transform:scaleX(0.946);-webkit-text-stroke:0.3px;text-decoration:underline;text-decoration-thickness:2px;text-underline-offset:3px;">PASAR PADANG TEMBAK</span>
<span class="t" style="left:1569.5px;top:1045.23px;font-size:23px;line-height:28px;font-weight:400;color:#333;transform:scaleX(1.0457);-webkit-text-stroke:0.3px;">Julat Harga (RM)</span>
<span class="t" style="left:1399.51px;top:1084.93px;font-size:20.4px;line-height:24px;font-weight:400;color:#444;transform:scaleX(1.0871);">20</span>
<span class="t" style="left:1740.5px;top:1084.93px;font-size:20.4px;line-height:24px;font-weight:400;color:#444;transform:scaleX(1.0385);">40</span>
<span class="t" style="left:2079.41px;top:1084.93px;font-size:20.4px;line-height:24px;font-weight:400;color:#444;transform:scaleX(1.0871);">60</span>
<span class="t" style="left:1550.5px;top:1124.61px;font-size:24.8px;line-height:30px;font-weight:700;color:#4380eb;transform:scaleX(1.0365);">30.00</span>
<span class="t" style="left:1410.44px;top:1167.15px;font-size:23.8px;line-height:29px;font-weight:400;color:#000;transform:scaleX(1.0632);-webkit-text-stroke:0.3px;">24.00</span>
<span class="t" style="left:1826.5px;top:1167.15px;font-size:23.8px;line-height:29px;font-weight:400;color:#000;transform:scaleX(1.0705);-webkit-text-stroke:0.3px;">44.00</span>
<span class="t" style="left:1600px;top:1221.11px;font-size:24.8px;line-height:30px;font-weight:700;color:#4380eb;transform:scaleX(0.9476);-webkit-text-stroke:0.21px;">32.81</span>
<span class="t" style="left:2181.62px;top:1201.04px;font-size:32.2px;line-height:39px;font-weight:700;color:#fff;transform:scaleX(0.938);-webkit-text-stroke:0.32px;z-index:30;">Feedback</span>
<span class="t" style="left:2028.44px;top:646.52px;font-size:34px;line-height:41px;font-weight:700;color:#1d0f85;transform:scaleX(0.9818);z-index:7;">Price</span>
<span class="t" style="left:2110.77px;top:646.52px;font-size:34px;line-height:41px;font-weight:400;color:#1d0f85;transform:scaleX(1.0312);-webkit-text-stroke:0.3px;z-index:7;">Catcher</span>
<span class="t" style="left:740.33px;top:343.84px;font-size:24.7px;line-height:30px;font-weight:700;color:#333;transform:scaleX(0.9724);z-index:12;">PASAR PADANG TEMBAK</span>
<span class="t" style="left:626.9px;top:703.36px;font-size:23.2px;line-height:28px;font-weight:400;color:#333;transform:scaleX(1.0391);-webkit-text-stroke:0.3px;z-index:12;">300 m</span>
<span class="t" style="left:760.17px;top:716.07px;font-size:22.9px;line-height:27px;font-weight:400;color:#0078a8;transform:scaleX(1.0297);z-index:12;">Leaflet</span>
<span class="t" style="left:837.95px;top:716.07px;font-size:22.9px;line-height:27px;font-weight:400;color:#333;transform:scaleX(1.0254);z-index:12;">| ©</span>
<span class="t" style="left:875.37px;top:716.07px;font-size:22.9px;line-height:27px;font-weight:400;color:#0078a8;transform:scaleX(1.0309);z-index:12;">OpenStreetMap</span>
<span class="t" style="left:1049.4px;top:716.07px;font-size:22.9px;line-height:27px;font-weight:400;color:#333;transform:scaleX(1.0709);z-index:12;">contributors</span>

</body></html>
